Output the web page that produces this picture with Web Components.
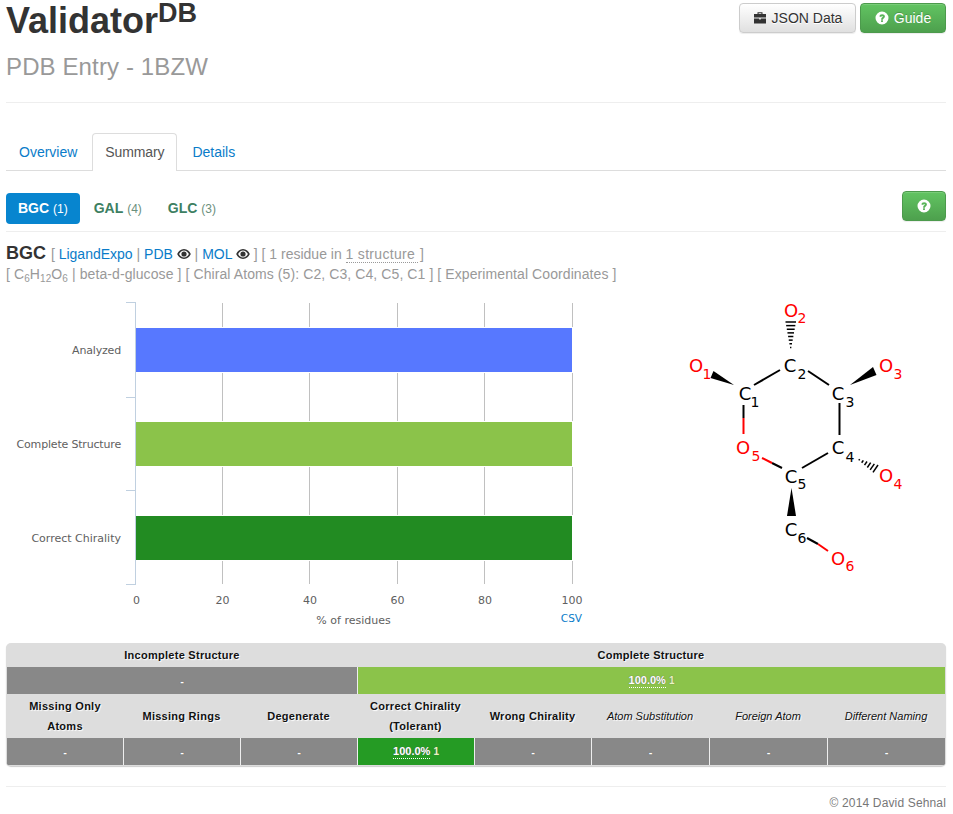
<!DOCTYPE html>
<html>
<head>
<meta charset="utf-8">
<title>ValidatorDB</title>
<style>
    html, body { margin: 0; background: #fff; }
    body { font-family: "Liberation Sans", Arial, sans-serif; font-size: 14px; color: #333; overflow: hidden; }
    .container { width: 940px; margin-left: 6px; }
</style>
</head>
<body>
<div class="container">
    <vdb-header></vdb-header>
    <vdb-tabs></vdb-tabs>
    <vdb-pills></vdb-pills>
    <vdb-entry></vdb-entry>
    <vdb-plots>
        <vdb-chart></vdb-chart>
        <vdb-molecule></vdb-molecule>
    </vdb-plots>
    <vdb-table></vdb-table>
    <vdb-footer>© 2014 David Sehnal</vdb-footer>
</div>
<script>
const ICONS = {
    briefcase: `<path d="M4.5 3V1.2h5V3H13v3.6H1V3zM5.6 3h2.8V2.2H5.6zM1 7.6h5.2v1h1.6v-1H13V12.5H1z"/>`,
    question: `<path fill-rule="evenodd" d="M7 .5a6.5 6.5 0 1 1 0 13a6.5 6.5 0 0 1 0-13zM4.4 5.6l1.9.3c.1-.6.3-.9.8-.9c.4 0 .7.2.7.6c0 .8-1.7 1.1-1.7 2.9v.2h1.8c0-1.4 2-1.4 2-3.3C9.9 4 8.7 3.3 7.1 3.3C5.5 3.3 4.6 4.1 4.4 5.6zM6.1 9.2v1.7h1.8V9.2z"/>`,
    eye: `<path fill-rule="evenodd" d="M7 2c3.2 0 5.6 2.2 6.8 5c-1.2 2.8-3.6 5-6.8 5s-5.6-2.2-6.8-5C1.400 4.200 3.800 2 7 2zM7 3.400c-2.100 0-3.900 1.500-4.900 3.600c1 2.100 2.800 3.600 4.900 3.600s3.900-1.500 4.900-3.600C10.900 4.900 9.100 3.400 7 3.400zM7 4.400a2.600 2.600 0 1 1 0 5.200a2.600 2.600 0 0 1 0-5.200z"/>`
};

class VdbIcon extends HTMLElement {
    connectedCallback() {
        const name = this.getAttribute('name');
        const size = this.getAttribute('size') || 14;
        this.attachShadow({ mode: 'open' }).innerHTML = `
            <style>
                :host { display: inline-block; width: ${size}px; height: ${size}px; line-height: 0; vertical-align: -2px; }
                svg { width: 100%; height: 100%; fill: currentColor; }
            </style>
            <svg viewBox="0 0 14 14">${ICONS[name]}</svg>
        `;
    }
}

class VdbButton extends HTMLElement {
    connectedCallback() {
        this.attachShadow({ mode: 'open' }).innerHTML = `
            <style>
                :host { display: inline-flex; align-items: center; justify-content: center; gap: 5px; box-sizing: border-box; height: 30px; border-radius: 4px; font-size: 14px; border: 1px solid #ccc; background: linear-gradient(#fff, #e0e0e0); color: #333; text-shadow: 0 1px 0 #fff; box-shadow: inset 0 1px 0 rgba(255,255,255,.15), 0 1px 1px rgba(0,0,0,.075); }
                :host([variant="success"]) { background: linear-gradient(#62c462, #4da04d); border-color: #4c9a4c; color: #fff; text-shadow: 0 -1px 0 rgba(0,0,0,.2); }
            </style>
            <slot></slot>
        `;
    }
}

class VdbHeader extends HTMLElement {
    connectedCallback() {
        this.attachShadow({ mode: 'open' }).innerHTML = `
            <style>
                :host { display: flex; justify-content: space-between; height: 102px; border-bottom: 1px solid #eee; }
                h1 { margin: 0; font-size: 36px; line-height: 40px; font-weight: 700; color: #333; padding-top: 1px; }
                sup { font-size: 27px; line-height: 0; vertical-align: 11px; }
                h2 { margin: 13px 0 0; font-size: 24px; line-height: 26px; font-weight: 400; color: #999; letter-spacing: .12px; }
                .actions { display: flex; gap: 4px; padding-top: 3px; }
                .json { width: 117px; }
                .guide { width: 86px; }
            </style>
            <div>
                <h1>Validator<sup>DB</sup></h1>
                <h2>PDB Entry - 1BZW</h2>
            </div>
            <div class="actions">
                <vdb-button class="json"><vdb-icon name="briefcase"></vdb-icon>JSON Data</vdb-button>
                <vdb-button class="guide" variant="success"><vdb-icon name="question"></vdb-icon>Guide</vdb-button>
            </div>
        `;
    }
}

class VdbTabs extends HTMLElement {
    connectedCallback() {
        this.attachShadow({ mode: 'open' }).innerHTML = `
            <style>
                :host { display: flex; gap: 2px; height: 37px; margin-top: 30px; border-bottom: 1px solid #ddd; }
                a { box-sizing: border-box; height: 38px; padding: 0 12px; border: 1px solid transparent; border-bottom: 0; border-radius: 4px 4px 0 0; line-height: 37px; color: #0a7cc9; }
                a.active { color: #555; background: #fff; border-color: #ddd; letter-spacing: -.12px; }
            </style>
            <a>Overview</a><a class="active">Summary</a><a>Details</a>
        `;
    }
}

class VdbPills extends HTMLElement {
    connectedCallback() {
        const pills = [['BGC', 1], ['GAL', 4], ['GLC', 3]];
        const items = pills.map(([name, count], i) =>
            `<a class="${i === 0 ? 'active' : ''}"><b>${name}</b> <small>(${count})</small></a>`).join('');
        this.attachShadow({ mode: 'open' }).innerHTML = `
            <style>
                :host { display: flex; justify-content: space-between; align-items: flex-start; height: 40px; margin-top: 20px; border-bottom: 1px solid #eee; }
                .list { display: flex; gap: 2px; margin-top: 2px; }
                a { box-sizing: border-box; height: 31px; padding: 0 12px; border-radius: 4px; line-height: 31px; color: #3d8062; white-space: nowrap; }
                small { font-size: 12px; color: #6b8f7d; }
                a.active { background: #0785cf; color: #fff; }
                a.active small { color: #fff; }
                vdb-button { width: 44px; }
            </style>
            <div class="list">${items}</div>
            <vdb-button variant="success"><vdb-icon name="question"></vdb-icon></vdb-button>
        `;
    }
}

class VdbEntry extends HTMLElement {
    connectedCallback() {
        this.attachShadow({ mode: 'open' }).innerHTML = `
            <style>
                :host { display: block; margin-top: 11px; color: #999; font-size: 14px; line-height: 21px; }
                b { font-size: 18px; color: #333; margin-right: 1px; }
                a { color: #0a7cc9; }
                .dotted { border-bottom: 1px dotted #999; letter-spacing: .3px; padding-right: 3px; margin-right: -2px; }
                vdb-icon { color: #333; }
                sub { font-size: 10px; line-height: 0; vertical-align: -3px; }
                .second { letter-spacing: .09px; margin-top: -1px; }
            </style>
            <div><b>BGC</b> [ <a>LigandExpo</a> | <a>PDB</a> <vdb-icon name="eye"></vdb-icon> | <a>MOL</a> <vdb-icon name="eye"></vdb-icon> ] [ 1 residue in <span class="dotted">1 structure</span> ]</div>
            <div class="second">[ C<sub>6</sub>H<sub>12</sub>O<sub>6</sub> | beta-d-glucose ] [ Chiral Atoms (5): C2, C3, C4, C5, C1 ] [ Experimental Coordinates ]</div>
        `;
    }
}

class VdbPlots extends HTMLElement {
    connectedCallback() {
        this.attachShadow({ mode: 'open' }).innerHTML = `
            <style>
                :host { display: flex; justify-content: space-between; height: 340px; margin-top: 10px; }
            </style>
            <slot></slot>
        `;
    }
}

class VdbChart extends HTMLElement {
    connectedCallback() {
        const gridX = [222.5, 309.5, 397.5, 484.5, 572.5];
        const ticks = [302.5, 397.5, 490.5, 584.5];
        const bars = [
            ['Analyzed', 328, '#5778ff', 354, -.18],
            ['Complete Structure', 422, '#8bc34a', 448, -.18],
            ['Correct Chirality', 516, '#228b22', 542, 0]
        ];
        const labelsX = [[136.5, '0'], [222.500, '20'], [310, '40'], [397.500, '60'], [485, '80'], [572, '100']];
        this.attachShadow({ mode: 'open' }).innerHTML = `
            <style>
                :host { display: block; width: 590px; height: 340px; }
                svg { display: block; }
                text { font-family: "DejaVu Sans", Verdana, sans-serif; font-size: 11px; fill: #606060; }
                .csv { fill: #0a7cc9; font-size: 10.5px; }
            </style>
            <svg width="590" height="340" viewBox="6 295 590 340">
                ${gridX.map(x => `<line x1="${x}" x2="${x}" y1="303" y2="584" stroke="#c0c0c0"/>`).join('')}
                ${bars.map(([, y, color]) => `<rect x="135" y="${y - 1}" width="438" height="46" fill="#fff"/><rect x="136" y="${y}" width="436" height="44" fill="${color}"/>`).join('')}
                <line x1="135.500" x2="135.500" y1="302" y2="585" stroke="#c0d0e0"/>
                ${ticks.map(y => `<line x1="126" x2="136" y1="${y}" y2="${y}" stroke="#c0d0e0"/>`).join('')}
                ${bars.map(([name, , , y, ls]) => `<text style="letter-spacing:${ls}px" x="121" y="${y}" text-anchor="end">${name}</text>`).join('')}
                ${labelsX.map(([x, t]) => `<text x="${x}" y="604" text-anchor="middle">${t}</text>`).join('')}
                <text x="353.500" y="624" text-anchor="middle">% of residues</text>
                <text class="csv" x="582" y="622" text-anchor="end">CSV</text>
            </svg>
        `;
    }
}

class VdbMolecule extends HTMLElement {
    connectedCallback() {
        const atoms = [
            ['C', 1, 745, 393, 755, 402], ['C', 2, 790, 365, 802, 374], ['C', 3, 838, 393, 850, 402],
            ['C', 4, 838, 447, 850, 457], ['C', 5, 791, 476, 802, 484], ['C', 6, 791, 529, 802, 538],
            ['O', 1, 696, 365, 707, 374], ['O', 2, 791, 310, 802, 318], ['O', 3, 886, 365, 898, 374],
            ['O', 4, 886, 475, 898, 484], ['O', 5, 743, 447, 756, 456], ['O', 6, 838, 558, 850, 566]
        ];
        const black = [[754, 385, 780, 370], [808, 371, 829, 385], [839.500, 403, 839.500, 435], [828, 453, 802, 468], [782, 468, 772, 463], [743.500, 405, 743.500, 418], [807, 538, 818, 544]];
        const red = [[772, 463, 762, 458], [743.500, 418, 743.500, 434], [818, 544, 828, 551]];
        const hash = (x0, y0, ax, ay, bx, by, n) => Array.from({ length: n }, (_, i) => {
            const t = (i + 1) / n;
            return `<line x1="${x0 + (ax - x0) * t}" y1="${y0 + (ay - y0) * t}" x2="${x0 + (bx - x0) * t}" y2="${y0 + (by - y0) * t}"/>`;
        }).join('');
        this.attachShadow({ mode: 'open' }).innerHTML = `
            <style>
                :host { display: block; width: 260px; height: 340px; margin-right: 26px; }
                svg { display: block; }
                text { font-family: "DejaVu Sans", sans-serif; font-size: 18px; text-anchor: middle; }
                .sub { font-size: 14px; }
            </style>
            <svg width="260" height="340" viewBox="660 295 260 340">
                <g stroke="#000" stroke-width="2" fill="none">
                    ${black.map(l => `<line x1="${l[0]}" y1="${l[1]}" x2="${l[2]}" y2="${l[3]}"/>`).join('')}
                </g>
                <g stroke="#000" stroke-width="1.500" fill="none">
                    ${hash(790.700, 351, 785.500, 322, 796, 322, 8)}
                    ${hash(856, 458, 873, 472.300, 878, 465, 6)}
                </g>
                <g stroke="#f00" stroke-width="2">
                    ${red.map(l => `<line x1="${l[0]}" y1="${l[1]}" x2="${l[2]}" y2="${l[3]}"/>`).join('')}
                </g>
                <polygon points="734,385 713.500,371 710.500,378"/>
                <polygon points="850,385 873,367 876.500,375"/>
                <polygon points="791.500,488 787,516 796,516"/>
                ${atoms.map(([el, n, x, y, sx, sy]) => {
                    const fill = el === 'O' ? '#f00' : '#000';
                    return `<text x="${x}" y="${y + 6.500}" fill="${fill}">${el}</text><text class="sub" x="${sx}" y="${sy + 5}" fill="${fill}">${n}</text>`;
                }).join('')}
            </svg>
        `;
    }
}

class VdbTable extends HTMLElement {
    connectedCallback() {
        const heads = [
            ['Missing Only Atoms'], ['Missing Rings'], ['Degenerate'], ['Correct Chirality (Tolerant)'],
            ['Wrong Chirality'], ['Atom Substitution', 'i'], ['Foreign Atom', 'i'], ['Different Naming', 'i']
        ];
        const rate = '<span class="rate">100.0%</span> <span class="count">1</span>';
        this.attachShadow({ mode: 'open' }).innerHTML = `
            <style>
                :host { display: grid; grid-template-columns: 116px 117px 117px 117px 117px 118px 118px 118px; grid-template-rows: 24px 27px 44px 27px; box-sizing: border-box; width: 940px; margin-top: 8px; padding: 0 1px 1px; border-radius: 5px; background: #ddd; overflow: hidden; font-size: 11px; line-height: 20px; box-shadow: 0 1px 1px #ccc; }
                div { display: flex; align-items: center; justify-content: center; text-align: center; }
                .head { font-weight: 700; color: #111; letter-spacing: .27px; text-shadow: 1px 1px 1px #fff; padding: 0 6px; }
                .i { font-weight: 400; font-style: italic; letter-spacing: 0; padding: 0; }
                .cell { font-weight: 700; color: #fff; background: #888; text-shadow: 0 0 1px #555; }
                .cell + .cell { border-left: 1px solid #eee; }
                .wide3 { grid-column: span 3; }
                .wide5 { grid-column: span 5; }
                .lime { background: #8bc34a; }
                .green { background: #259b24; }
                .rate { border-bottom: 1px dotted #fff; line-height: 13px; margin-right: 3px; }
                .count { font-size: 10px; color: #e8f5c0; }
            </style>
            <div class="head wide3">Incomplete Structure</div>
            <div class="head wide5">Complete Structure</div>
            <div class="cell wide3">-</div>
            <div class="cell wide5 lime">${rate}</div>
            ${heads.map(([t, i]) => `<div class="head ${i || ''}"><span>${t}</span></div>`).join('')}
            ${heads.map((_, n) => `<div class="cell ${n === 3 ? 'green' : ''}">${n === 3 ? rate : '-'}</div>`).join('')}
        `;
    }
}

class VdbFooter extends HTMLElement {
    connectedCallback() {
        this.attachShadow({ mode: 'open' }).innerHTML = `
            <style>
                :host { display: block; margin-top: 20px; padding-top: 9px; border-top: 1px solid #eee; text-align: right; font-size: 12px; line-height: 14px; color: #777; letter-spacing: .15px; }
            </style>
            <slot></slot>
        `;
    }
}

customElements.define('vdb-icon', VdbIcon);
customElements.define('vdb-button', VdbButton);
customElements.define('vdb-header', VdbHeader);
customElements.define('vdb-tabs', VdbTabs);
customElements.define('vdb-pills', VdbPills);
customElements.define('vdb-entry', VdbEntry);
customElements.define('vdb-plots', VdbPlots);
customElements.define('vdb-chart', VdbChart);
customElements.define('vdb-molecule', VdbMolecule);
customElements.define('vdb-table', VdbTable);
customElements.define('vdb-footer', VdbFooter);
</script>
</body>
</html>
